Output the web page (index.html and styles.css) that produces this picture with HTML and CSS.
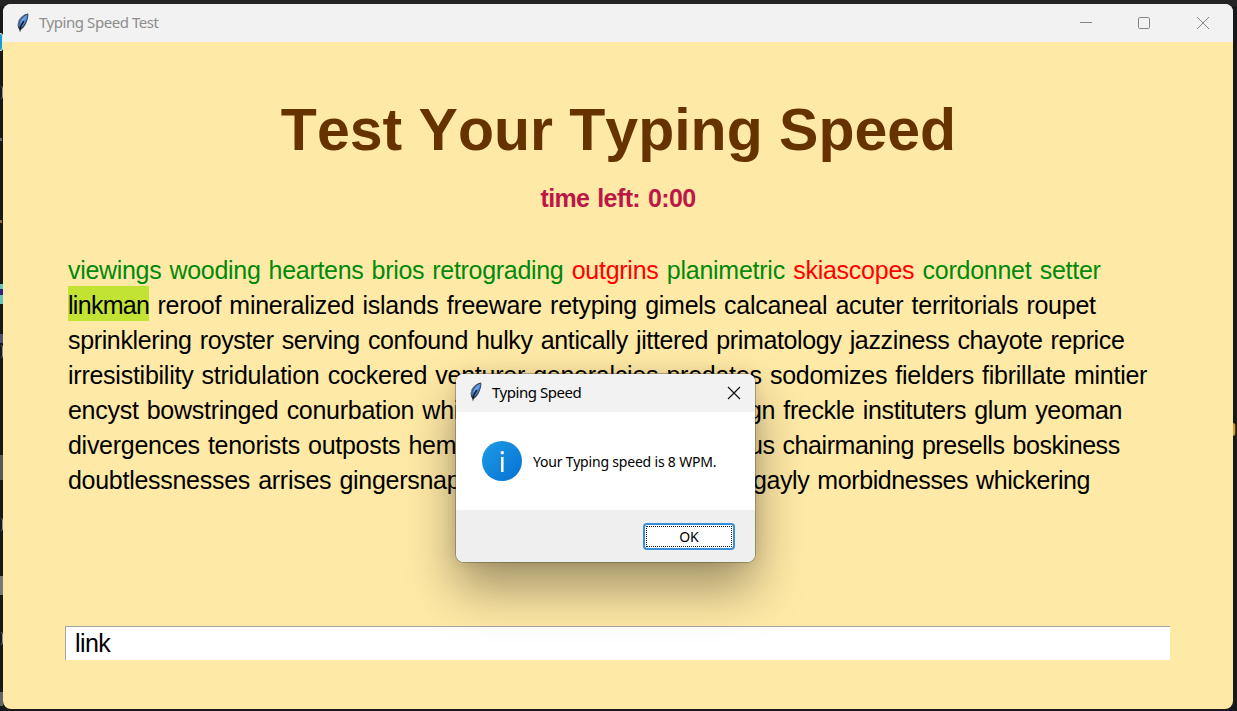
FILE: index.html
```html
<!DOCTYPE html>
<html lang="en">
<head>
<meta charset="utf-8">
<title>Typing Speed Test</title>
<link rel="stylesheet" href="styles.css">
</head>
<body>
<svg width="0" height="0" class="defs">
  <defs>
    <linearGradient id="blue" x1="0" y1="0" x2="1" y2="1"><stop offset="0" stop-color="#1e9be6"/><stop offset="1" stop-color="#0571d2"/></linearGradient>
    <symbol id="feather" viewBox="0 0 14 20">
      <path d="M4 19.500 3.200 16.500C1.200 14 1.300 9.500 3.500 6C5.500 3 9 .8 12.200 .5C12.800 3 11.800 6.500 10.300 10C9 13 7.200 15.500 5 16.800Z" fill="#36404e"/>
      <path d="M3.300 13.500C2.600 8.500 6 3.500 11.600 1.600C11.500 6 9 11.500 5.500 14.500Z" fill="#4c86d4"/>
      <path d="M4.500 10C5.500 6.500 8 3.800 11 2.300C10 5 8 8 6.500 10Z" fill="#6ea4ea"/>
      <path d="M3.800 16.500C4.500 13.500 6 10.500 7.800 8" fill="none" stroke="#131a26" stroke-width="1.500"/>
      <path d="M2.300 13C1.600 9.500 4 5 8 2.200" fill="none" stroke="#7e8998" stroke-width=".8"/>
    </symbol>
  </defs>
</svg>
<main class="window">
  <header class="titlebar">
    <svg class="feather"><use href="#feather"/></svg>
    <span class="caption">Typing Speed Test</span>
    <svg class="controls" viewBox="0 0 132 14" fill="none" stroke="#858585"><path d="M1 6.500h12"/><rect x="59.500" y="1.500" width="11" height="11" rx="1.200"/><path d="M118 1l12 12M130 1l-12 12"/></svg>
  </header>
  <h1 class="heading">Test Your Typing Speed</h1>
  <p class="timer">time left: 0:00</p>
  <section class="words">
    <p class="line l1"><span class="good first">viewings wooding heartens brios retrograding</span> <span class="bad">outgrins</span> <span class="good">planimetric</span> <span class="bad">skiascopes</span> <span class="good">cordonnet setter</span></p>
    <p class="line l2"><span class="current">linkman</span> reroof mineralized islands freeware retyping gimels calcaneal acuter territorials roupet</p>
    <p class="line l3">sprinklering royster serving confound hulky antically jittered primatology jazziness chayote reprice</p>
    <p class="line l4">irresistibility stridulation cockered venturer generalcies predates sodomizes fielders fibrillate mintier</p>
    <div class="line split"><span class="start">encyst bowstringed conurbation whi</span><span class="r5">gn freckle instituters glum yeoman</span></div>
    <div class="line split"><span class="start">divergences tenorists outposts hem</span><span class="r6">us chairmaning presells boskiness</span></div>
    <div class="line split"><span class="start">doubtlessnesses arrises gingersnap</span><span class="r7">gayly morbidnesses whickering</span></div>
  </section>
  <div class="entry">link</div>
</main>
<section class="dialog">
  <header class="dialog-title">
    <svg class="feather"><use href="#feather"/></svg>
    <span class="dialog-caption">Typing Speed</span>
    <svg class="close" viewBox="0 0 14 14"><path d="M1 1l12 12M13 1L1 13" stroke="#111" stroke-width="1.200"/></svg>
  </header>
  <div class="message">
    <svg class="info" viewBox="0 0 40 40"><circle cx="20" cy="20" r="20" fill="url(#blue)"/><circle cx="20.300" cy="11.700" r="1.700" fill="#fff"/><path d="M20.300 16v15" stroke="#fff" stroke-width="2.500"/></svg>
    <span class="message-text">Your Typing speed is 8 WPM.</span>
  </div>
  <footer class="actions"><button class="ok"><span class="focus">OK</span></button></footer>
</section>
<div class="marks">
  <i class="mark selected"></i><i class="mark round m2"></i><i class="mark dot m3"></i><i class="mark dot m4"></i><i class="mark teal"></i><i class="mark bar m6"></i><i class="mark round m7"></i><i class="mark bar m8"></i><i class="mark round m9"></i><i class="mark bar m10"></i><i class="mark round m11"></i><i class="mark bar m12"></i><i class="mark orange"></i>
</div>
</body>
</html>
```

FILE: styles.css
```css
* { box-sizing: border-box; }
body { margin: 0; width: 1237px; height: 711px; overflow: hidden; position: relative; padding: 4px 4px 2px 3px; background: linear-gradient(#242424 0, #242424 6px, #18191b 7px); font-family: "Liberation Sans", Arial, sans-serif; }
p, h1 { margin: 0; font-weight: 400; }
.defs { position: absolute; }
.window { width: 1230px; height: 705px; border-radius: 8px; overflow: hidden; background: #ffe9a6; display: flex; flex-direction: column; }
.titlebar { height: 38px; flex: none; background: #f2f2f2; display: flex; align-items: center; padding: 0 22px 0 13px; }
.feather { width: 14px; height: 20px; flex: none; }
.caption { margin: 0 0 2px 9px; font: 15px/20px "Noto Sans", sans-serif; color: #8d8d8d; white-space: nowrap; letter-spacing: -.44px; }
.controls { width: 132px; height: 14px; margin-left: auto; }
.heading { margin-top: 53px; padding-left: 1px; height: 70px; line-height: 70px; text-align: center; font-size: 59px; font-weight: 700; color: #663300; white-space: nowrap; font-kerning: none; }
.timer { margin-top: 18px; height: 32px; line-height: 31px; text-align: center; font-size: 25px; font-weight: 700; color: #bd1748; white-space: nowrap; letter-spacing: -.6px; word-spacing: 1.5px; }
.words { margin-top: 36px; padding-left: 65px; font-size: 25px; color: #000; font-kerning: none; word-spacing: 1.5px; }
.line { height: 35px; line-height: 39px; white-space: nowrap; }
.split { display: flex; }
.l1 { letter-spacing: -.25px; }
.first { letter-spacing: -.31px; }
.l2 { letter-spacing: -.26px; }
.l3 { letter-spacing: -.354px; }
.l4 { letter-spacing: -.252px; }
.start { width: 388px; flex: none; letter-spacing: -.28px; }
.good { color: #008a0b; }
.bad { color: #f00; }
.current { background: #c3e334; letter-spacing: -.7px; padding: 5px 0 2px; }
.r5 { margin-left: 292px; letter-spacing: -.33px; }
.r6 { margin-left: 293px; letter-spacing: -.44px; }
.r7 { margin-left: 297px; letter-spacing: -.41px; }
.entry { margin: 130px 63px 0 62px; height: 34px; flex: none; background: #fff; border-top: 1px solid #a5a5a5; border-left: 1px solid #a5a5a5; padding-left: 9px; font-size: 25px; line-height: 33px; letter-spacing: -.6px; }
.dialog { position: absolute; left: 456px; top: 374px; width: 299px; height: 188px; border-radius: 8px; background: #fff; overflow: hidden; box-shadow: 0 0 0 1px rgba(80,75,50,.4), 0 26px 50px rgba(0,0,0,.38), 0 0 14px rgba(0,0,0,.1); }
.dialog-title { height: 38px; display: flex; align-items: center; padding: 0 14px 2px 13px; background: #f2f2f2; }
.dialog-caption { margin-left: 9px; font: 15px/20px "Noto Sans", sans-serif; letter-spacing: -.45px; }
.close { width: 14px; height: 14px; margin: 2px 0 0 auto; }
.message { height: 98px; display: flex; align-items: center; padding-left: 26px; }
.info { width: 40px; height: 40px; flex: none; }
.message-text { margin: 2px 0 0 11px; font: 14px/20px "Noto Sans", sans-serif; white-space: nowrap; letter-spacing: -.19px; }
.actions { height: 52px; background: #efefef; display: flex; justify-content: flex-end; padding: 13px 20px 0 0; }
.ok { width: 92px; height: 27px; padding: 1px; border: 2px solid #388fd8; border-radius: 4px; background: #fff; }
.focus { display: block; height: 21px; border: 1px dotted #222; font: 14px/19px "Noto Sans", sans-serif; }
.mark { position: absolute; left: 0; width: 3px; height: 8px; background: #62666a; }
.selected { top: 33px; height: 18px; background: #159ed0; border: solid #e8e6d8; border-width: 1px 1px 1px 0; border-radius: 0 3px 3px 0; }
.round { background: none; border-right: 1px solid #87929a; border-radius: 0 6px 6px 0; height: 13px; }
.dot { width: 2px; height: 3px; }
.m2 { top: 86px; } .m3 { top: 138px; } .m4 { top: 220px; background: #8e6c48; }
.teal { top: 284px; height: 20px; background: linear-gradient(#65c5bb 0 5px, #322082 5px 11px, #65c5bb 11px); }
.m6 { top: 334px; height: 9px; background: #4c5270; } .m7 { top: 345px; }
.m8 { top: 455px; height: 25px; background: #555a5b; } .m9 { top: 518px; }
.m10 { top: 576px; height: 19px; background: #777; } .m11 { top: 632px; } .m12 { top: 692px; height: 14px; }
.orange { left: 1233px; top: 423px; width: 3px; height: 13px; background: #c3a52d; border-right: 1px solid #7c2518; border-radius: 0 5px 5px 0; }
```
